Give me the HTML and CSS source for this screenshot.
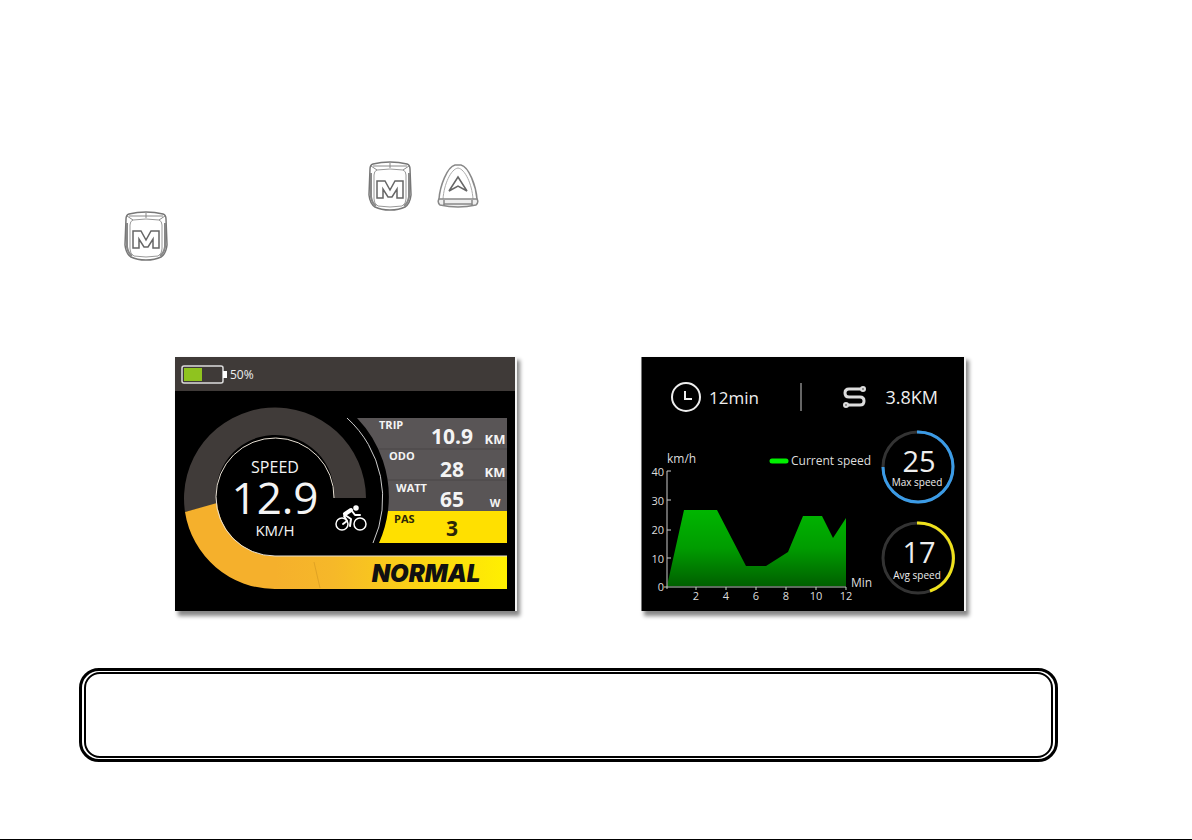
FILE: index.html
```
<!DOCTYPE html>
<html lang="en">
    <head>
        <meta charset="UTF-8">
        <meta name="viewport" content="width=device-width, initial-scale=1.0">
        <title>Display manual</title>
        <link rel="stylesheet" href="styles.css">
    </head>
    <body>
        <!-- Shared key drawing -->
        <svg class="defs" width="0" height="0" aria-hidden="true">
            <symbol id="key-m" viewBox="0 0 44 50">
                <path d="M5 3Q13 1 22 1T39 3Q42 4 42 8L43 34Q42 43 37 46Q31 49 22 49T7 46Q2 43 1 34L2 8Q2 4 5 3Z" fill="#fff" stroke="#777" stroke-width="1.5"/>
                <path d="M9 9Q22 7 35 9Q38 10 38 14V38Q38 43 34 45Q22 47 10 45Q6 43 6 38V14Q6 10 9 9Z" fill="#fff" stroke="#999"/>
                <path d="M3 5L9 9M41 5L35 9M5 5H39M22 2V7" fill="none" stroke="#888"/>
                <path d="M3 12V36Q4 42 8 45M41 12V36Q40 42 36 45" fill="none" stroke="#888" stroke-width="2"/>
                <path d="M9 37V20H17L22 29L27 20H35V37H29V28L24 36H20L15 28V37Z" fill="#fff" stroke="#666" stroke-width="1.5"/>
            </symbol>
        </svg>
        <main class="page">
            <div class="keys keys-first">
                <button class="key" aria-label="Mode"><svg width="44" height="50"><use href="#key-m"/></svg></button>
                <button class="key" aria-label="Up">
                    <svg width="42" height="44" viewBox="0 0 42 44">
                        <path d="M2 35C3 22 10 3 18 1H24C32 3 39 22 40 35" fill="none" stroke="#888" stroke-width="1.5"/>
                        <path d="M6 35C7 20 14 5 21 4C28 5 35 20 36 35" fill="none" stroke="#aaa"/>
                        <path d="M2 35H40Q42 38 39 41Q21 45 3 41Q0 38 2 35ZM7 36V41M35 36V41M7 40H35" fill="#eee" stroke="#888" stroke-width="1.5"/>
                        <path d="M12 27L21 13L30 27L21 22Z" fill="#fff" stroke="#666" stroke-width="1.5"/>
                    </svg>
                </button>
            </div>
            <div class="keys keys-second">
                <button class="key" aria-label="Mode"><svg width="44" height="50"><use href="#key-m"/></svg></button>
            </div>

            <div class="screens">
                <!-- Riding screen -->
                <section class="screen screen-ride">
                    <div class="status-bar">
                        <svg width="46" height="19" viewBox="0 0 46 19">
                            <rect x="1" y="1" width="41" height="17" rx="2" fill="none" stroke="#ddd" stroke-width="1.5"/>
                            <rect x="3" y="3" width="18" height="13" fill="#8fc31f"/>
                            <rect x="42" y="6" width="4" height="7" fill="#fff"/>
                        </svg>
                        <span>50%</span>
                    </div>
                    <svg class="gauge" viewBox="0 0 340 220">
                        <defs>
                            <linearGradient id="bar" gradientUnits="userSpaceOnUse" x1="100" y1="0" x2="332" y2="0">
                                <stop offset="0" stop-color="#f5b02c"/>
                                <stop offset="0.25" stop-color="#f6b829"/>
                                <stop offset="1" stop-color="#fff000"/>
                            </linearGradient>
                        </defs>
                        <path d="M10 121A91 91 0 1 1 191 107H159A59 59 0 1 0 42 113Z" fill="#403b39"/>
                        <path d="M10 121A91 91 0 0 0 100 198H332V165H100A59 59 0 0 1 42 112Z" fill="url(#bar)"/>
                        <path d="M139 171L145 197" stroke="#e0a324"/>
                        <path d="M159 107A59 59 0 1 0 100 165H332" fill="none" stroke="#e8e0d4"/>
                        <path d="M172 27A108 108 0 0 1 198 152" fill="none" stroke="#ccc"/>
                        <path d="M182 27H332V120H213A114 114 0 0 0 182 27Z" fill="#595556"/>
                        <path d="M213 120H332V152H204A114 114 0 0 0 213 120Z" fill="#ffe000"/>
                        <path d="M204 58H332M213 89H332" stroke="#4a4646"/>

                        <text class="light" x="100" y="82" font-size="16">SPEED</text>
                        <text class="light" x="100" y="123" font-size="44">12.9</text>
                        <text class="light" x="100" y="145" font-size="15">KM/H</text>

                        <!-- Cyclist -->
                        <g fill="none" stroke="#fff" stroke-width="1.5" stroke-linecap="round" stroke-linejoin="round">
                            <circle cx="167" cy="133" r="6"/>
                            <circle cx="185" cy="133" r="6"/>
                            <circle cx="181" cy="117" r="2" fill="#fff"/>
                            <path d="M170 123L176 119" stroke-width="4"/>
                            <path d="M177 120L180 124H185M170 124L176 128L175 135M169 125L172 130L168 133" stroke-width="2"/>
                        </g>

                        <g class="label">
                            <text x="204" y="38">TRIP</text>
                            <text x="214" y="69">ODO</text>
                            <text x="221" y="101">WATT</text>
                            <text class="dark" x="219" y="132">PAS</text>
                        </g>
                        <g class="value">
                            <text x="277" y="53">10.9</text>
                            <text x="277" y="86">28</text>
                            <text x="277" y="116">65</text>
                            <text class="dark" x="277" y="145">3</text>
                        </g>
                        <g class="unit">
                            <text x="320" y="53">KM</text>
                            <text x="320" y="86">KM</text>
                            <text x="320" y="116" font-size="11">W</text>
                        </g>
                        <text class="mode" x="251" y="191">NORMAL</text>
                    </svg>
                </section>

                <!-- Statistics screen -->
                <section class="screen screen-stats">
                    <div class="summary">
                        <svg width="32" height="32" viewBox="0 0 32 32" fill="none" stroke="#eee" stroke-width="2">
                            <circle cx="16" cy="16" r="14"/>
                            <path d="M15 10V18H22"/>
                        </svg>
                        <span class="time">12min</span>
                        <span class="divider"></span>
                        <svg class="route" width="25" height="24" viewBox="0 0 25 24" fill="none" stroke="#ddd" stroke-width="3">
                            <path d="M19 4H7Q3 4 3 8T7 12H18Q22 12 22 16T18 20H5"/>
                            <circle cx="21" cy="4" r="2" stroke-width="2" fill="#777"/>
                            <circle cx="4" cy="20" r="2" stroke-width="2" fill="#777"/>
                        </svg>
                        <span class="distance">3.8KM</span>
                    </div>
                    <div class="stats-body">
                        <svg class="chart" viewBox="0 0 238 183">
                            <defs>
                                <linearGradient id="area" x1="0" y1="0" x2="0" y2="1">
                                    <stop offset="0" stop-color="#00b600"/>
                                    <stop offset="0.5" stop-color="#009c00"/>
                                    <stop offset="1" stop-color="#006000"/>
                                </linearGradient>
                            </defs>
                            <path d="M25 158L42 82H75L104 138H124L146 124L161 88H180L191 110L204 90V158Z" fill="url(#area)"/>
                            <path d="M29 43H25V161M25 72H29M25 102H29M25 130H29" fill="none" stroke="#ccc"/>
                            <path d="M22 159H204V162M54 159V162M84 159V162M114 159V162M144 159V162M174 159V162" fill="none" stroke="#bdd8bd"/>
                            <path d="M130 33H144" stroke="#00f000" stroke-width="5" stroke-linecap="round"/>
                            <g class="chart-name">
                                <text x="25" y="35">km/h</text>
                                <text x="149" y="37">Current speed</text>
                                <text x="209" y="159">Min</text>
                            </g>
                            <g class="tick-y">
                                <text x="22" y="48">40</text>
                                <text x="22" y="77">30</text>
                                <text x="22" y="106">20</text>
                                <text x="22" y="135">10</text>
                                <text x="22" y="163">0</text>
                            </g>
                            <g class="tick-x">
                                <text x="54" y="172">2</text>
                                <text x="84" y="172">4</text>
                                <text x="114" y="172">6</text>
                                <text x="144" y="172">8</text>
                                <text x="174" y="172">10</text>
                                <text x="204" y="172">12</text>
                            </g>
                        </svg>
                        <div class="dials">
                            <svg class="dial" viewBox="0 0 76 76">
                                <circle cx="38" cy="38" r="35"/>
                                <path d="M37 3A35 35 0 1 1 3 38" stroke="#3b9be6"/>
                                <text class="number" x="39" y="43">25</text>
                                <text class="caption" x="37" y="57">Max speed</text>
                            </svg>
                            <svg class="dial" viewBox="0 0 76 76">
                                <circle cx="38" cy="38" r="35"/>
                                <path d="M37 3A35 35 0 0 1 50 71" stroke="#efe11c"/>
                                <text class="number" x="39" y="43">17</text>
                                <text class="caption" x="37" y="59">Avg speed</text>
                            </svg>
                        </div>
                    </div>
                </section>
            </div>

            <!-- Empty note frame -->
            <div class="note">
                <div class="note-inner"></div>
            </div>
        </main>
    </body>
</html>
```
FILE: styles.css
```
* {
    box-sizing: border-box;
}

body {
    margin: 0;
    min-height: 100vh;
    background-color: #fff;
    border-bottom: 1px solid #000;
    font-family: "Open Sans", "Noto Sans", sans-serif;
}

svg {
    display: block;
    flex-shrink: 0;
}

.defs {
    position: absolute;
}

.page {
    padding: 161px 134px 76px 79px;
}

/* Keys */
.keys {
    display: flex;
    align-items: center;
    gap: 25px;
}

.keys-first {
    padding-left: 289px;
}

.keys-second {
    padding-left: 45px;
}

.key {
    padding: 0;
    border: 0;
    background: none;
    cursor: pointer;
}

/* Device screens */
.screens {
    display: flex;
    justify-content: space-between;
    align-items: flex-start;
    margin: 96px 94px 57px 96px;
}

.screen {
    background-color: #000;
    color: #eee;
    box-shadow: 2px 0 0 #f4f4f4, 4px 4px 4px 1px #888;
}

.screen-ride {
    width: 340px;
}

.status-bar {
    display: flex;
    align-items: center;
    gap: 3px;
    height: 34px;
    padding-left: 6px;
    background-color: #3f3a38;
    font-size: 12px;
}

.gauge {
    width: 100%;
}

.gauge text {
    fill: #f4f4f4;
    text-anchor: middle;
}

.gauge .label text {
    font-size: 11px;
    font-weight: 700;
    text-anchor: start;
}

.gauge .value text {
    font-size: 21px;
    font-weight: 700;
}

.gauge .unit text {
    font-weight: 700;
}

.gauge .unit {
    font-size: 13px;
}

.gauge text.dark {
    fill: #2c2608;
}

.gauge .mode {
    fill: #111;
    font-family: Inter, "Liberation Sans", sans-serif;
    font-size: 24px;
    font-style: italic;
    font-weight: 900;
}

/* Statistics */
.screen-stats {
    width: 323px;
    border-left: 1px solid #777;
}

.summary {
    display: flex;
    align-items: center;
    height: 71px;
    padding: 9px 26px 0 28px;
    font-size: 17px;
}

.time {
    margin-left: 7px;
}

.divider {
    width: 2px;
    height: 28px;
    margin: 0 auto;
    background-color: #666;
}

.route {
    margin-right: 18px;
}

.distance {
    font-size: 18px;
}

.stats-body {
    display: flex;
}

.chart {
    width: 238px;
    height: 183px;
}

.chart text {
    fill: #ddd;
    font-size: 11px;
}

.chart .chart-name text {
    font-size: 12px;
}

.tick-y {
    text-anchor: end;
}

.tick-x {
    text-anchor: middle;
}

.dials {
    display: flex;
    flex-direction: column;
    gap: 15px;
    padding-top: 1px;
}

.dial {
    width: 76px;
    height: 76px;
    fill: none;
    stroke-width: 3px;
}

.dial circle {
    stroke: #333;
}

.dial text {
    fill: #eee;
    text-anchor: middle;
}

.number {
    font-size: 29px;
}

.caption {
    font-size: 10px;
}

/* Note frame */
.note {
    padding: 1px 2px;
    border: 3px solid #000;
    border-radius: 20px;
}

.note-inner {
    min-height: 86px;
    border: 2px solid #000;
    border-radius: 16px;
}
```
